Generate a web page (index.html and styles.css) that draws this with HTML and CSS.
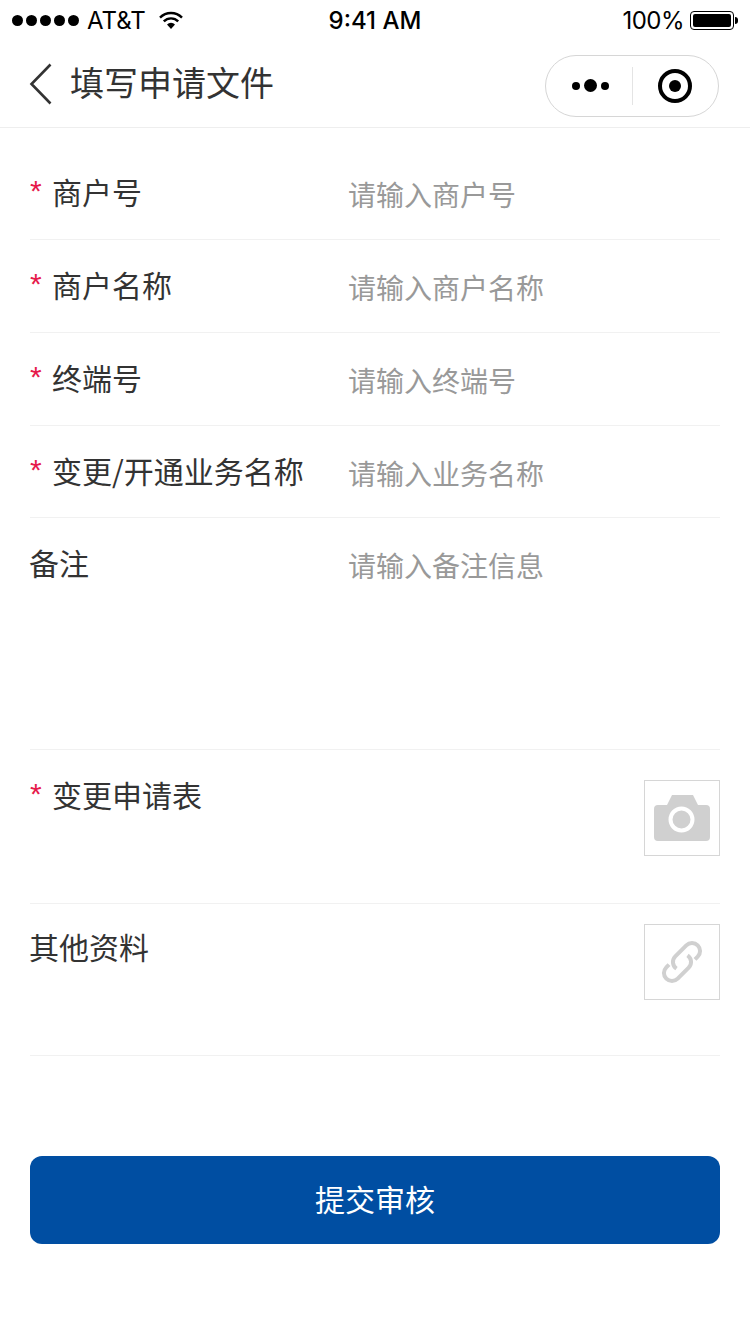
FILE: index.html
```html
<!DOCTYPE html>
<html lang="zh-CN">
<head>
    <meta charset="UTF-8">
    <meta name="viewport" content="width=device-width, initial-scale=1.0">
    <title>填写申请文件</title>
    <link rel="stylesheet" href="styles.css">
</head>
<body>
    <div class="status-bar">
        <div class="status-left">
            <span class="signal"><i></i><i></i><i></i><i></i><i></i></span>
            <span class="carrier">AT&amp;T</span>
            <svg class="wifi" width="24" height="18" viewBox="0 0 24 18">
                <path d="M1 6.600a15.500 15.500 0 0 1 22 0" fill="none" stroke="#000" stroke-width="2.400"/>
                <path d="M4.800 10.400a10 10 0 0 1 14.400 0" fill="none" stroke="#000" stroke-width="2.400"/>
                <path d="M8 13.400a5.500 5.500 0 0 1 8 0L12 18z" fill="#000"/>
            </svg>
        </div>
        <div class="status-time">9:41 AM</div>
        <div class="status-right">
            <span class="percent">100%</span>
            <span class="battery"><b></b></span>
            <span class="battery-tip"></span>
        </div>
    </div>

    <div class="nav-bar">
        <svg class="back" width="24" height="42" viewBox="0 0 24 42">
            <path d="M21.500 1.500 2.500 21l19 19.500" fill="none" stroke="#333" stroke-width="2.600"/>
        </svg>
        <div class="nav-title">填写申请文件</div>
        <div class="capsule">
            <div class="capsule-more"><i></i><i class="big"></i><i></i></div>
            <div class="capsule-line"></div>
            <div class="capsule-close"><b></b></div>
        </div>
    </div>

    <form class="form">
        <div class="row row-input">
            <label class="label"><span class="star">*</span>商户号</label>
            <div class="hint">请输入商户号</div>
        </div>
        <div class="row row-input">
            <label class="label"><span class="star">*</span>商户名称</label>
            <div class="hint">请输入商户名称</div>
        </div>
        <div class="row row-input">
            <label class="label"><span class="star">*</span>终端号</label>
            <div class="hint">请输入终端号</div>
        </div>
        <div class="row row-input row-short">
            <label class="label"><span class="star">*</span>变更/开通业务名称</label>
            <div class="hint">请输入业务名称</div>
        </div>
        <div class="row row-text">
            <label class="label">备注</label>
            <div class="hint">请输入备注信息</div>
        </div>
        <div class="row row-upload row-photo">
            <label class="label"><span class="star">*</span>变更申请表</label>
            <div class="upload">
                <svg width="56" height="46" viewBox="0 0 56 46">
                    <path fill="#d0d0d0" d="M4 10h9l5-10h21l5 10h8a4 4 0 0 1 4 4v28a4 4 0 0 1-4 4H4a4 4 0 0 1-4-4V14a4 4 0 0 1 4-4z"/>
                    <circle cx="27.500" cy="24.500" r="11" fill="#d0d0d0" stroke="#fff" stroke-width="4"/>
                </svg>
            </div>
        </div>
        <div class="row row-upload row-file">
            <label class="label">其他资料</label>
            <div class="upload">
                <svg width="44" height="44" viewBox="0 0 44 44" fill="none" stroke="#d0d0d0" stroke-width="4">
                    <path d="M35 19.400 37.700 16.700A8 8 0 0 0 26.300 5.300L15.300 16.300A8 8 0 0 0 16.500 28.600"/>
                    <path d="M9 24.600 6.300 27.300A8 8 0 0 0 17.700 38.700L28.700 27.700A8 8 0 0 0 27.500 15.400"/>
                </svg>
            </div>
        </div>
        <button class="submit" type="button">提交审核</button>
    </form>
</body>
</html>
```

FILE: styles.css
```css
* {
    box-sizing: border-box;
}
body {
    margin: 0;
    background-color: #fff;
    color: #333;
    font-family: "Noto Sans CJK SC", "Liberation Sans", sans-serif;
}
.status-bar {
    display: flex;
    align-items: center;
    height: 40px;
    padding: 0 12px;
    color: #000;
    font-family: "Inter", "Liberation Sans", sans-serif;
    font-size: 24px;
}
.status-left,
.status-right {
    display: flex;
    flex: 1;
    align-items: center;
}
.status-right {
    justify-content: flex-end;
}
.signal {
    display: flex;
    gap: 3px;
    margin-right: 8px;
}
.signal i {
    width: 11px;
    height: 11px;
    border-radius: 50%;
    background-color: #000;
}
.carrier {
    margin-right: 13px;
}
.status-time {
    font-weight: 500;
}
.percent {
    letter-spacing: -0.5px;
}
.battery {
    width: 44px;
    height: 19px;
    margin-left: 6px;
    padding: 2px;
    border: 1px solid #000;
    border-radius: 4px;
}
.battery b {
    display: block;
    height: 100%;
    background-color: #000;
    border-radius: 2px;
}
.battery-tip {
    width: 3px;
    height: 7px;
    margin: 0 0 0 1px;
    background-color: #000;
    border-radius: 0 3px 3px 0;
}
.nav-bar {
    display: flex;
    align-items: center;
    height: 88px;
    padding: 0 31px 0 29px;
    border-bottom: 1px solid #eee;
}
.back {
    margin-right: 17px;
}
.nav-title {
    flex: 1;
    margin-bottom: 4px;
    font-size: 34px;
}
.capsule {
    display: flex;
    align-items: center;
    width: 174px;
    height: 62px;
    margin-top: 4px;
    border: 1px solid #d6d6d6;
    border-radius: 31px;
}
.capsule-more {
    display: flex;
    justify-content: center;
    align-items: center;
    gap: 4px;
    width: 86px;
    padding-left: 2px;
}
.capsule-more i {
    width: 8px;
    height: 8px;
    border-radius: 50%;
    background-color: #000;
}
.capsule-more i.big {
    width: 13px;
    height: 13px;
}
.capsule-line {
    width: 1px;
    height: 38px;
    background-color: #e4e4e4;
}
.capsule-close {
    display: flex;
    justify-content: center;
    align-items: center;
    width: 34px;
    height: 34px;
    margin-left: 25px;
    border: 4px solid #000;
    border-radius: 50%;
}
.capsule-close b {
    width: 12px;
    height: 12px;
    border-radius: 50%;
    background-color: #000;
}
.form {
    padding: 0 30px;
}
.row {
    display: flex;
    border-bottom: 1px solid #f1f1f1;
}
.row-input {
    height: 93px;
    padding-top: 27px;
}
.row-input:first-child {
    height: 112px;
    padding-top: 46px;
}
.row-short {
    height: 92px;
}
.row-text {
    height: 232px;
    padding-top: 27px;
}
.row-upload {
    justify-content: space-between;
    padding-top: 30px;
}
.row-photo {
    height: 154px;
}
.row-file {
    height: 152px;
    padding-top: 20px;
}
.label {
    width: 318px;
    margin: -2px 0 0 -1px;
    font-size: 30px;
    line-height: 38px;
    white-space: nowrap;
}
.row-upload .label {
    margin-top: -5px;
}
.row-file .label {
    margin-top: 3px;
}
.star {
    display: inline-block;
    width: 22px;
    margin-left: 1px;
    color: #e6194b;
    font-family: "Liberation Sans", sans-serif;
    font-size: 30px;
    line-height: 1;
    vertical-align: 3px;
}
.hint {
    margin: 1px 0 0 1px;
    color: #999;
    font-size: 28px;
    line-height: 38px;
}
.upload {
    display: flex;
    justify-content: center;
    align-items: center;
    width: 76px;
    height: 76px;
    border: 1px solid #d6d6d6;
}
.submit {
    display: block;
    width: 100%;
    height: 88px;
    margin-top: 100px;
    padding: 0 0 4px;
    border: none;
    border-radius: 12px;
    background-color: #004ea2;
    color: #fff;
    font-family: inherit;
    font-size: 30px;
}
```
